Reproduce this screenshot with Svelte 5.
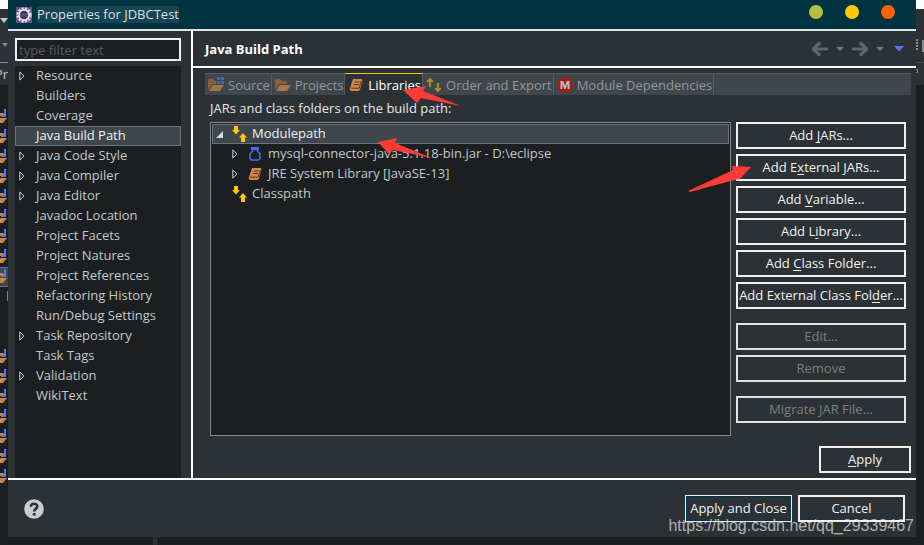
<script>
  const pages = [
    { name: 'Resource', parent: true },
    { name: 'Builders' },
    { name: 'Coverage' },
    { name: 'Java Build Path', selected: true },
    { name: 'Java Code Style', parent: true },
    { name: 'Java Compiler', parent: true },
    { name: 'Java Editor', parent: true },
    { name: 'Javadoc Location' },
    { name: 'Project Facets' },
    { name: 'Project Natures' },
    { name: 'Project References' },
    { name: 'Refactoring History' },
    { name: 'Run/Debug Settings' },
    { name: 'Task Repository', parent: true },
    { name: 'Task Tags' },
    { name: 'Validation', parent: true },
    { name: 'WikiText' }
  ];
  const tabs = [
    { name: 'Source', icon: 'source' },
    { name: 'Projects', icon: 'folder' },
    { name: 'Libraries', icon: 'book', active: true },
    { name: 'Order and Export', icon: 'order' },
    { name: 'Module Dependencies', icon: 'module' }
  ];
  const entries = [
    { name: 'Modulepath', icon: 'path', level: 0, open: true, selected: true },
    { name: 'mysql-connector-java-5.1.18-bin.jar - D:\\eclipse', icon: 'jar', level: 1, parent: true },
    { name: 'JRE System Library [JavaSE-13]', icon: 'book', level: 1, parent: true },
    { name: 'Classpath', icon: 'path', level: 0 }
  ];
  // Button labels are split round their mnemonic letter.
  const actions = [
    [['Add ', 'J', 'ARs...'], ['Add E', 'x', 'ternal JARs...'], ['Add ', 'V', 'ariable...'], ['Add L', 'i', 'brary...'], ['Add ', 'C', 'lass Folder...'], ['Add External Class Fol', 'd', 'er...']],
    [['Edit...', '', ''], ['Remove', '', '']],
    [['Migrate JAR File...', '', '']]
  ];
  const files = [1, 1, 1, 1, 1, 1, 1, 1, 2, 3, 0, 0, 1, 1, 1, 1, 1, 1, 1];
</script>

{#snippet twistie()}
  <svg class="twistie" width="6" height="10" viewBox="0 0 6 10"><path d="M.8 1v8L4.900 5z" fill="none" stroke="#d0d3d4" /></svg>
{/snippet}

{#snippet icon(kind)}
  <svg class="icon" width="16" height="16" viewBox="0 0 16 16" aria-hidden="true">
    {#if kind === 'source' || kind === 'folder'}
      <path d="M0 13V3l1-1h4l2 2h4l1 1v2H4z" fill="#8c5f3b" />
      <path d="M4.500 8H16l-4 6H1z" fill="#a97543" />
      {#if kind === 'source'}
        <path d="M8 0h9v8H8z" fill="#3f464c" />
        <path d="M9 0h3v3H9zM13 0h3v3h-3zM9 4h3v3H9zM13 4h3v3h-3z" fill="#4a62c8" />
      {/if}
    {:else if kind === 'book'}
      <path d="M5 2h8.500l1 1-2.500 9.500-1.500 1.500H3L1.500 12.500z" fill="#d28745" />
      <path d="M6.500 5h5M5.800 7.500h5M3.200 11.200h8L13.300 4" fill="none" stroke="#5a3520" />
    {:else if kind === 'order'}
      <path d="M4 10V2M1.200 4.800L4 2l2.800 2.800" fill="none" stroke="#b8931f" stroke-width="1.800" />
      <path d="M12 6v8M9.200 11.200L12 14l2.800-2.800" fill="none" stroke="#b8931f" stroke-width="1.800" />
    {:else if kind === 'module'}
      <circle cx="8" cy="8" r="7.800" fill="#a91a1d" />
      <path d="M3.500 12V4h2.700L8 8.800 9.800 4h2.700v8h-1.900V6.800L8.700 12H7.300L5.400 6.800V12z" fill="#b9bcbc" />
    {:else if kind === 'path'}
      <path d="M3 0h4v4h2L5 8.500 1 4h2z" fill="#ffc600" />
      <path d="M12 7l4 4.500h-2V16h-4v-4.500H8z" fill="#ffc600" />
    {:else if kind === 'jar'}
      <path d="M4 1h8v3H4z" fill="#4a6cf0" />
      <path d="M5.500 4v1.500L3 7.500v5L4.500 14h7l1.500-1.500v-5l-2.500-2V4" fill="none" stroke="#4a6cf0" stroke-width="1.500" />
    {/if}
  </svg>
{/snippet}

{#snippet label(parts)}{parts[0]}{#if parts[1]}<u>{parts[1]}</u>{/if}{parts[2]}{/snippet}

<div class="desktop">
  <div class="edge">
    <div class="blank"></div>
    <div class="tools">
      <svg width="8" height="76" viewBox="0 0 8 76"><path d="M0 9h8L4 14z" fill="#c6c9ca" /><path d="M2 34h6l-3 4z" fill="#85898a" /><path d="M0 53.500h8" stroke="#8b8e90" /></svg>
      <span class="pr">Pr</span>
    </div>
    <div class="files">
      {#each files as f}
        <div class="file" class:current={f === 2}>
          {#if f === 1 || f === 2}
            <svg width="8" height="20" viewBox="0 0 8 20"><path d="M0 6h3l1.500 1.500V9H0zM0 11h7l-4 5H0z" fill="#cf853f" /><path d="M4 2h2v8H1V8h3z" fill="#5277ff" /></svg>
          {:else if f === 3}
            <svg width="8" height="20" viewBox="0 0 8 20"><path d="M7 4h1v10H7z" fill="#a97543" /></svg>
          {/if}
        </div>
      {/each}
    </div>
  </div>

  <div class="dialog">
    <header class="titlebar">
      <svg width="16" height="16" viewBox="0 0 16 16" aria-hidden="true">
        <rect width="16" height="16" fill="#6b4a8f" />
        <circle cx="8" cy="8" r="6.500" fill="none" stroke="#d9dcdc" stroke-width="2.500" stroke-dasharray="2.300 1.100" />
        <circle cx="8" cy="8" r="5" fill="#37314f" stroke="#eceeee" stroke-width="1.500" />
        <path d="M4 7h8M4 9h8" stroke="#6c6685" />
      </svg>
      <h1>Properties for JDBCTest</h1>
      <div class="window-buttons">
        <button class="min" aria-label="Minimize"></button>
        <button class="max" aria-label="Maximize"></button>
        <button class="close" aria-label="Close"></button>
      </div>
    </header>

    <div class="body">
      <nav class="sidebar">
        <input type="text" placeholder="type filter text" aria-label="type filter text" />
        <ul class="pages">
          {#each pages as p}
            <li class:selected={p.selected}>
              <span class="twist">{#if p.parent}{@render twistie()}{/if}</span>
              <a href="#page">{p.name}</a>
            </li>
          {/each}
        </ul>
      </nav>

      <main>
        <div class="heading">
          <h2>Java Build Path</h2>
          <div class="history">
            <button aria-label="Back"><svg width="16" height="16" viewBox="0 0 16 16"><path d="M16 8H3M8 1.500L1.500 8 8 14.500" fill="none" stroke="#62666f" stroke-width="3.200" /></svg></button>
            <button aria-label="Back history"><svg width="8" height="4" viewBox="0 0 8 4"><path d="M0 0h8L4 4z" fill="#777a7c" /></svg></button>
            <button aria-label="Forward"><svg width="16" height="16" viewBox="0 0 16 16"><path d="M0 8h13M8 1.500L14.500 8 8 14.500" fill="none" stroke="#62666f" stroke-width="3.200" /></svg></button>
            <button aria-label="Forward history"><svg width="8" height="4" viewBox="0 0 8 4"><path d="M0 0h8L4 4z" fill="#777a7c" /></svg></button>
            <button class="menu" aria-label="View menu"><svg width="10" height="6" viewBox="0 0 10 6"><path d="M0 0h10L5 5.500z" fill="#5277ff" /></svg></button>
          </div>
        </div>

        <div class="tabs" role="tablist">
          {#each tabs as t}
            <button role="tab" aria-selected={!!t.active} class:active={t.active}>{@render icon(t.icon)}<span>{t.name}</span></button>
          {/each}
          <svg class="arrow on-tab" width="58" height="22" viewBox="0 0 58 22" aria-hidden="true"><path d="M0 4L23 0l-3 5 38 15-40-8-4 5z" fill="#ff3b38" /></svg>
        </div>

        <div class="content">
          <p>JARs and class folders on the build path:</p>
          <div class="columns">
            <div class="tree" role="tree">
              {#each entries as e}
                <div class="entry" role="treeitem" aria-selected={!!e.selected} tabindex="-1" class:selected={e.selected} class:child={e.level === 1}>
                  <span class="twist">
                    {#if e.open}
                      <svg class="twistie" width="7" height="7" viewBox="0 0 7 7"><path d="M7 0v7H0z" fill="#d8dadb" /></svg>
                    {:else if e.parent}{@render twistie()}{/if}
                  </span>
                  {@render icon(e.icon)}
                  <span>{e.name}</span>
                </div>
              {/each}
              <svg class="arrow on-tree" width="54" height="20" viewBox="0 0 54 20" aria-hidden="true"><path d="M0 4L19 0l-2 5 37 15-39-8-4 4z" fill="#ff3b38" /></svg>
            </div>
            <div class="actions">
              {#each actions as group, i}
                <div class="group">
                  {#each group as parts}
                    <button class="push" disabled={i > 0}>{@render label(parts)}</button>
                  {/each}
                </div>
              {/each}
              <svg class="arrow on-action" width="64" height="28" viewBox="0 0 64 28" aria-hidden="true"><path d="M63 3L44 2l1 4L0 27l2 1 48-13 1 1z" fill="#ff3b38" /></svg>
            </div>
          </div>
        </div>
        <div class="apply"><button class="push"><u>A</u>pply</button></div>
      </main>
    </div>

    <footer>
      <button class="help" aria-label="Help">
        <svg width="20" height="20" viewBox="0 0 20 20"><circle cx="10" cy="10" r="9.800" fill="#cbcccc" /><path d="M6.800 7.800C6.800 3.700 13.300 3.800 13.300 7.500 13.300 9.800 10.200 9.500 10.200 12.500" fill="none" stroke="#2c3135" stroke-width="2.600" /><path d="M8.800 14h2.800v2.600H8.800z" fill="#2c3135" /></svg>
      </button>
      <button class="push default">Apply and Close</button>
      <button class="push">Cancel</button>
    </footer>
  </div>

  <div class="edge">
    <div class="blank"></div>
    <div class="tools">
      <svg width="8" height="76" viewBox="0 0 8 76"><path d="M1 30v12" stroke="#8b8e90" stroke-width="2" stroke-dasharray="2 1" /><path d="M6 31h2v12H6z" fill="#85898a" /><path d="M0 53.500h8" stroke="#4a4e51" /><path d="M0 60.500h1.500v3H0" fill="none" stroke="#85898a" /></svg>
    </div>
  </div>
  <div class="sash"></div>
  <div class="watermark">https://blog.csdn.net/qq_29339467</div>
</div>

<style>
  :global(body) { margin: 0; background: #1c1f22; }
  .desktop {
    position: relative;
    box-sizing: border-box;
    display: grid;
    grid-template-columns: 8px minmax(0, 1fr) 8px;
    min-height: 100vh;
    padding-bottom: 8px;
    background: #1c1f22;
    color: #c3c7c9;
    font: 13px/18px "Open Sans", "Noto Sans", sans-serif;
  }
  button, input { font: inherit; color: inherit; box-sizing: border-box; margin: 0; }
  button { padding: 0; border: 0; background: none; }
  svg { display: block; flex: none; }
  h1, h2, p, ul { margin: 0; padding: 0; font: inherit; }

  .edge { overflow: hidden; }
  .edge .blank { height: 9px; background: #fff; }
  .edge .tools { position: relative; height: 76px; background: #2c3135; }
  .pr { position: absolute; top: 56px; left: -5px; }
  .files { padding-top: 22px; }
  .file { height: 20px; }
  .file.current { background: #3f464c; border: solid #66757f; border-width: 1px 0; box-sizing: border-box; }
  .file.current svg { margin-top: -1px; }

  .dialog { display: flex; flex-direction: column; background: #2c3135; }
  .titlebar {
    display: flex;
    align-items: center;
    height: 29px;
    padding: 0 21px 0 8px;
    background: #003340;
    border-bottom: 2px solid #dfe3e5;
  }
  .titlebar h1 { margin-left: 5px; line-height: 17px; background: #184553; color: #d9dfe1; }
  .window-buttons { display: flex; gap: 22px; margin-left: auto; padding-bottom: 5px; }
  .window-buttons button { width: 14px; height: 14px; border-radius: 50%; }
  .min { background: #b2bf3c; }
  .max { background: #ffc800; }
  .close { background: #ff6200; }

  .body { flex: 1; display: flex; border-bottom: 2px solid #fff; }
  .sidebar {
    flex: none;
    display: flex;
    flex-direction: column;
    gap: 5px;
    box-sizing: border-box;
    width: 185px;
    padding: 7px 10px 0 7px;
    border-right: 2px solid #fff;
  }
  .sidebar input {
    width: 100%;
    height: 23px;
    padding: 0 2px;
    border: 2px solid #f0f0f0;
    border-radius: 0;
    background: #1c1f22;
  }
  .sidebar input::placeholder { color: #5a5c5d; opacity: 1; }
  .pages { flex: 1; list-style: none; background: #1c1f22; }
  .pages li { display: flex; align-items: center; height: 20px; }
  .pages a { color: inherit; text-decoration: none; }
  .pages .twist { width: 21px; padding-left: 4px; box-sizing: border-box; }
  .pages a, .entry span:last-child { padding-bottom: 2px; }
  .selected { background: #3f464c; outline: 1px solid #66757f; outline-offset: -1px; }
  .pages .selected, .tree .selected { color: #f0f2f2; }

  main { flex: 1; min-width: 0; display: flex; flex-direction: column; }
  .heading {
    display: flex;
    align-items: center;
    height: 35px;
    padding: 0 12px;
    border-bottom: 2px solid #fff;
  }
  h2 { font-weight: 700; color: #fff; }
  .history { display: flex; align-items: center; gap: 8px; margin-left: auto; }
  .history .menu { margin-left: 2px; }

  .tabs {
    position: relative;
    display: flex;
    box-sizing: border-box;
    height: 22px;
    margin: 5px 5px 0 12px;
    background: #3f464c;
    border-top: 1px solid #565c61;
    color: #92979a;
  }
  .tabs button {
    display: flex;
    align-items: center;
    gap: 4px;
    padding: 0 1px 0 3px;
    border-right: 1px solid #555b60;
    white-space: nowrap;
  }
  .tabs .active { margin-top: -1px; border-top: 1px solid #ffc600; background: #2c3135; color: #fff; }

  .content { flex: 1; display: flex; flex-direction: column; padding: 4px 10px 0 17px; }
  .content p { color: #e6e8e8; margin-bottom: 5px; }
  .columns { flex: 1; display: flex; gap: 5px; }
  .tree { position: relative; flex: 1; min-width: 0; padding: 1px; border: 1px solid #85898c; background: #1c1f22; }
  .entry { display: flex; align-items: center; height: 20px; white-space: nowrap; }
  .entry .twist { flex: none; width: 19px; padding-left: 4px; box-sizing: border-box; }
  .entry.child .twist { margin-left: 16px; }
  .entry .icon { margin-right: 5px; }

  .actions { position: relative; flex: none; width: 170px; }
  .group { display: flex; flex-direction: column; gap: 5px; }
  .group + .group { margin-top: 14px; }
  .push {
    height: 27px;
    border: 2px solid #f0f0f0;
    color: #f0f2f2;
    line-height: 23px;
    white-space: nowrap;
  }
  .push:disabled { color: #7c7f80; border-color: #e0e2e3; }
  .push u { text-underline-offset: 2px; }
  .apply { display: flex; justify-content: flex-end; padding: 10px 5px 5px; }
  .apply .push { width: 92px; }

  footer { display: flex; align-items: center; gap: 6px; height: 57px; padding: 0 11px 0 16px; }
  footer .push { width: 107px; }
  .help { margin-right: auto; }
  footer .default { border: 1px solid #f0f0f0; box-shadow: inset 0 0 0 1px #003a4a; }

  .arrow { position: absolute; z-index: 1; pointer-events: none; }
  .on-tab { left: 198px; top: 12px; }
  .on-tree { left: 167px; top: 15px; }
  .on-action { left: -48px; top: 42px; }
  .sash { position: absolute; bottom: 0; left: 153px; width: 4px; height: 8px; background: #2c3135; }
  .watermark {
    position: absolute;
    right: 10px;
    bottom: 8px;
    font: 16px/22px "Liberation Sans", Arial, sans-serif;
    color: #ffffffa0;
  }
</style>
